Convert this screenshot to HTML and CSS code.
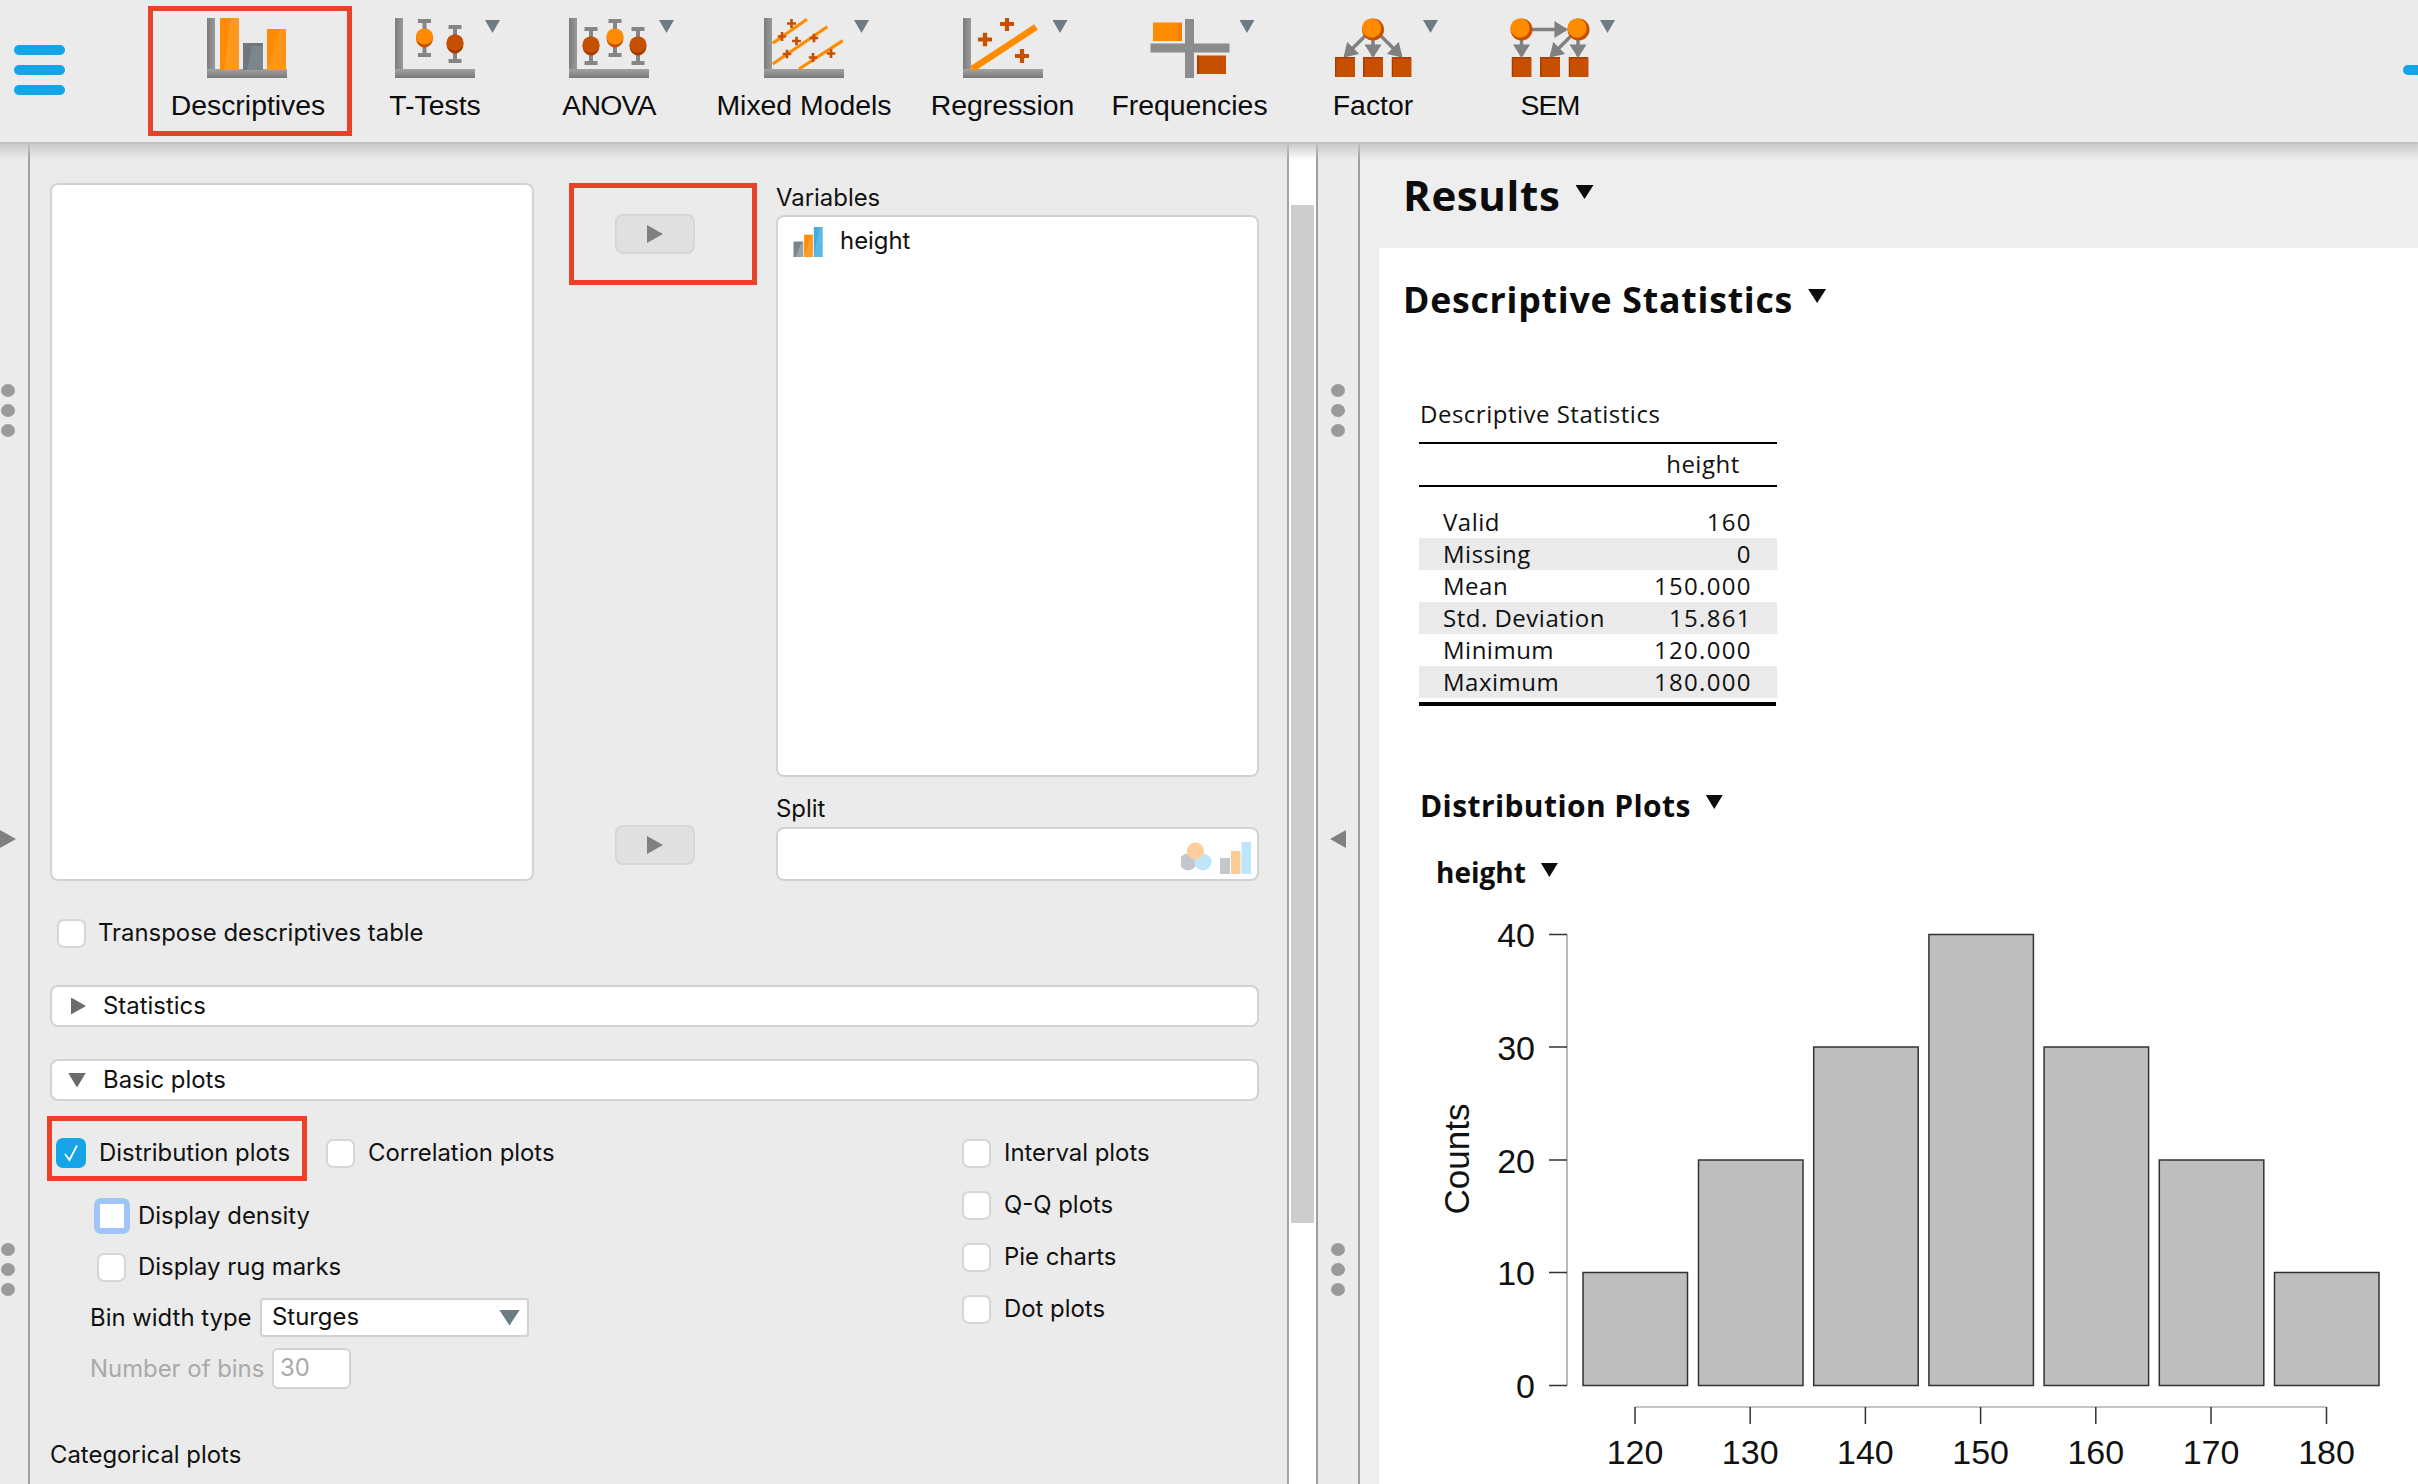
FILE: index.html
```html
<!DOCTYPE html>
<html lang="en">
<head>
<meta charset="utf-8">
<title>JASP Descriptives</title>
<link rel="stylesheet" href="styles.css">
</head>
<body>
<svg class="defs" aria-hidden="true">
  <defs>
    <linearGradient id="axv" x1="0" x2="1" y1="0" y2="0"><stop offset="0" stop-color="#7c7c7c"/><stop offset="1" stop-color="#9a9a9a"/></linearGradient>
    <linearGradient id="axh" x1="0" x2="0" y1="0" y2="1"><stop offset="0" stop-color="#a2a2a2"/><stop offset="1" stop-color="#7a7a7a"/></linearGradient>
    <marker id="ah" markerWidth="5" markerHeight="5" refX="3.4" refY="2.5" orient="auto" markerUnits="strokeWidth"><path d="M0 0L4 2.5L0 5Z" fill="#808080"/></marker>
    <symbol id="axis" viewBox="0 0 80 60">
      <rect x="0" y="0" width="8" height="60" fill="url(#axv)"/>
      <rect x="0" y="51" width="80" height="9" fill="url(#axh)"/>
    </symbol>
    <symbol id="ib-o" viewBox="0 0 18 38">
      <path d="M2.500 0h13v4h-4.500v30h4.500v4h-13v-4h4.500v-30h-4.500z" fill="#858585"/>
      <ellipse cx="9" cy="19" rx="8.500" ry="9.500" fill="#c65000"/>
      <ellipse cx="9" cy="17.500" rx="8.500" ry="8" fill="#ff8c00"/>
    </symbol>
    <symbol id="ib-d" viewBox="0 0 18 38">
      <path d="M2.500 0h13v4h-4.500v30h4.500v4h-13v-4h4.500v-30h-4.500z" fill="#858585"/>
      <ellipse cx="9" cy="19" rx="8.500" ry="9.500" fill="#a23c00"/>
      <ellipse cx="9" cy="17.500" rx="8.500" ry="8" fill="#c65000"/>
    </symbol>
    <symbol id="plus" viewBox="0 0 10 10">
      <path d="M3.500 0h3v3.500h3.500v3h-3.500v3.500h-3v-3.500h-3.500v-3h3.500z" fill="#c65000"/>
    </symbol>
    <symbol id="node" viewBox="0 0 24 24">
      <circle cx="12" cy="12" r="11.500" fill="#c65000"/>
      <ellipse cx="10.500" cy="10.500" rx="10" ry="10" fill="#ff8c00"/>
    </symbol>
    <symbol id="box" viewBox="0 0 20 20">
      <rect x="0" y="0" width="20" height="20" fill="#a83c00"/>
      <rect x="1.500" y="1.500" width="18.500" height="18.500" fill="#c65000"/>
    </symbol>
  </defs>
</svg>

<div class="app">
  <header class="toolbar">
    <button class="menu" aria-label="Menu"><span></span><span></span><span></span></button>

    <div class="tool tool-desc">
      <svg class="tool-icon" viewBox="0 0 80 60">
        <use href="#axis" width="80" height="60"/>
        <rect x="13" y="0" width="19" height="52" fill="#ff8c00"/>
        <path d="M24 0h8v52h-15z" fill="#ffa640" opacity=".45"/>
        <rect x="36" y="25" width="20" height="27" fill="#6f7880"/>
        <path d="M40 52L45 28h11v24z" fill="#8a9198" opacity=".5"/>
        <rect x="60" y="11" width="19" height="41" fill="#ff8c00"/>
        <path d="M60 52L73 11h6v41z" fill="#ffa640" opacity=".35"/>
      </svg>
      <span class="tool-label">Descriptives</span>
      <span class="mark mark-desc"></span>
    </div>

    <div class="tool tool-ttest">
      <svg class="tool-icon" viewBox="0 0 80 60">
        <use href="#axis" width="80" height="60"/>
        <use href="#ib-o" x="20.500" y="1" width="18" height="38"/>
        <use href="#ib-d" x="51" y="7" width="18" height="38"/>
      </svg>
      <span class="tool-label">T-Tests</span>
      <i class="drop"></i>
    </div>

    <div class="tool tool-anova">
      <svg class="tool-icon" viewBox="0 0 80 60">
        <use href="#axis" width="80" height="60"/>
        <use href="#ib-d" x="13" y="9" width="18" height="38"/>
        <use href="#ib-o" x="37" y="1" width="18" height="38"/>
        <use href="#ib-d" x="60" y="9" width="18" height="38"/>
      </svg>
      <span class="tool-label">ANOVA</span>
      <i class="drop"></i>
    </div>

    <div class="tool tool-mixed">
      <svg class="tool-icon" viewBox="0 0 80 60">
        <use href="#axis" width="80" height="60"/>
        <g stroke="#ff8c00" stroke-width="3.200" fill="none">
          <path d="M8.700 25.300L43 1.300"/>
          <path d="M8.700 46L63.300 8.700"/>
          <path d="M35 51L78.700 22.700"/>
        </g>
        <use href="#plus" x="23" y="1" width="9" height="9"/>
        <use href="#plus" x="13.500" y="14" width="9" height="9"/>
        <use href="#plus" x="28" y="18.500" width="9" height="9"/>
        <use href="#plus" x="45.500" y="15.500" width="9" height="9"/>
        <use href="#plus" x="18.500" y="31.500" width="9" height="9"/>
        <use href="#plus" x="44.500" y="35" width="9" height="9"/>
        <use href="#plus" x="62.500" y="31" width="9" height="9"/>
      </svg>
      <span class="tool-label">Mixed Models</span>
      <i class="drop"></i>
    </div>

    <div class="tool tool-reg">
      <svg class="tool-icon" viewBox="0 0 80 60">
        <use href="#axis" width="80" height="60"/>
        <path d="M9 51L73 9" stroke="#ff8c00" stroke-width="6.500" fill="none"/>
        <use href="#plus" x="37" y="-1" width="14" height="14"/>
        <use href="#plus" x="15" y="14.500" width="14" height="14"/>
        <use href="#plus" x="52" y="31" width="14" height="14"/>
      </svg>
      <span class="tool-label">Regression</span>
      <i class="drop"></i>
    </div>

    <div class="tool tool-freq">
      <svg class="tool-icon" viewBox="0 0 80 60">
        <rect x="3" y="4.500" width="29" height="18.500" fill="#ff8c00"/>
        <rect x="28" y="5" width="4" height="18" fill="#f27c10"/>
        <rect x="47" y="37.500" width="29" height="18.500" fill="#c65000"/>
        <rect x="47" y="37.500" width="2" height="18.500" fill="#a83c00"/>
        <rect x="0.500" y="25.500" width="79" height="9" fill="#8c8c8c"/>
        <rect x="35" y="1" width="9" height="59" fill="#8c8c8c"/>
      </svg>
      <span class="tool-label">Frequencies</span>
      <i class="drop"></i>
    </div>

    <div class="tool tool-factor">
      <svg class="tool-icon" viewBox="0 0 80 60">
        <use href="#box" x="2" y="39" width="20" height="20"/>
        <use href="#box" x="30" y="39" width="20" height="20"/>
        <use href="#box" x="58.500" y="39" width="20" height="20"/>
        <g stroke="#808080" stroke-width="3.400" fill="none">
          <path d="M34 16L12 38" marker-end="url(#ah)"/>
          <path d="M40 18V38" marker-end="url(#ah)"/>
          <path d="M46 16L68 38" marker-end="url(#ah)"/>
        </g>
        <use href="#node" x="28.500" y="0" width="23" height="23"/>
      </svg>
      <span class="tool-label">Factor</span>
      <i class="drop"></i>
    </div>

    <div class="tool tool-sem">
      <svg class="tool-icon" viewBox="0 0 80 60">
        <use href="#box" x="1.500" y="39" width="20" height="20"/>
        <use href="#box" x="30" y="39" width="20" height="20"/>
        <use href="#box" x="58.500" y="39" width="20" height="20"/>
        <g stroke="#808080" stroke-width="3.400" fill="none">
          <path d="M20 11.500H56" marker-end="url(#ah)"/>
          <path d="M11.500 20V38" marker-end="url(#ah)"/>
          <path d="M62 17L41 38" marker-end="url(#ah)"/>
          <path d="M68 20V38" marker-end="url(#ah)"/>
        </g>
        <use href="#node" x="0" y="0" width="23" height="23"/>
        <use href="#node" x="57" y="0" width="23" height="23"/>
      </svg>
      <span class="tool-label">SEM</span>
      <i class="drop"></i>
    </div>

    <span class="peek"></span>
  </header>

  <main class="main">
    <aside class="strip strip-left">
      <div class="dots dots-top"><i></i><i></i><i></i></div>
      <i class="arrow arrow-right"></i>
      <div class="dots dots-bottom"><i></i><i></i><i></i></div>
    </aside>

    <section class="panel">
      <div class="assign">
        <div class="listbox source"></div>
        <div class="assign-mid">
          <span class="mark mark-btn"></span>
          <button class="move"><i class="tri-move"></i></button>
          <button class="move move-last"><i class="tri-move"></i></button>
        </div>
        <div class="assign-right">
          <div class="field-label label-vars">Variables</div>
          <div class="listbox target">
            <div class="var-item">
              <svg class="var-icon" viewBox="0 0 30 31">
                <rect x="0" y="15" width="10" height="16" fill="#7d858c"/>
                <path d="M2 31L8 17h2v14z" fill="#9aa1a7"/>
                <rect x="11" y="8" width="9" height="23" fill="#ff8c00"/>
                <path d="M11 31L18 8h2v23z" fill="#ffa640" opacity=".6"/>
                <rect x="21" y="0" width="9" height="31" fill="#43ade2"/>
                <path d="M21 31L27 0h3v31z" fill="#6cc2ec" opacity=".6"/>
              </svg>
              <span>height</span>
            </div>
          </div>
          <div class="field-label label-split">Split</div>
          <div class="listbox split">
            <svg class="split-icons" viewBox="0 0 76 32">
              <circle cx="7" cy="20" r="8.500" fill="#c4c6c9"/>
              <circle cx="22" cy="20" r="8.500" fill="#bde6fb"/>
              <ellipse cx="14.500" cy="9" rx="8.500" ry="8.500" fill="#fdcf9d"/>
              <rect x="39" y="16" width="10" height="16" fill="#c4c8cc"/>
              <rect x="50" y="9" width="9.500" height="23" fill="#fdcb96"/>
              <rect x="60.500" y="0" width="9.500" height="32" fill="#bde6fb"/>
            </svg>
          </div>
        </div>
      </div>

      <label class="row row-transpose"><i class="check"></i><span>Transpose descriptives table</span></label>

      <div class="section sec-stats"><i class="sec-right"></i><span>Statistics</span></div>
      <div class="section sec-basic"><i class="sec-down"></i><span>Basic plots</span></div>

      <div class="plots">
        <div class="plots-left">
          <div class="row-pair">
            <label class="row row-dist"><i class="check check-on"><svg viewBox="0 0 30 30"><path d="M9 16l4.500 6L21 7.500" fill="none" stroke="#fff" stroke-width="1.800"/></svg></i><span>Distribution plots</span></label>
            <label class="row"><i class="check"></i><span>Correlation plots</span></label>
            <span class="mark mark-dist"></span>
          </div>
          <label class="row row-sub row-density"><i class="check check-focus"></i><span>Display density</span></label>
          <label class="row row-sub row-rug"><i class="check"></i><span>Display rug marks</span></label>
          <div class="row row-field row-bin">
            <span class="field-name name-bin">Bin width type</span>
            <div class="select"><span>Sturges</span><i class="select-tri"></i></div>
          </div>
          <div class="row row-field row-num">
            <span class="field-name name-num">Number of bins</span>
            <div class="num-input">30</div>
          </div>
          <div class="cat-title">Categorical plots</div>
        </div>
        <div class="plots-right">
          <label class="row"><i class="check"></i><span>Interval plots</span></label>
          <label class="row"><i class="check"></i><span>Q-Q plots</span></label>
          <label class="row"><i class="check"></i><span>Pie charts</span></label>
          <label class="row"><i class="check"></i><span>Dot plots</span></label>
        </div>
      </div>
    </section>

    <div class="scroll"><div class="thumb"></div></div>

    <aside class="strip strip-right">
      <div class="dots dots-top"><i></i><i></i><i></i></div>
      <i class="arrow arrow-left"></i>
      <div class="dots dots-bottom"><i></i><i></i><i></i></div>
    </aside>

    <section class="results">
      <h1 class="results-title">Results<i class="tri-head"></i></h1>
      <div class="sheet">
        <h2 class="h-desc">Descriptive Statistics<i class="tri-head"></i></h2>
        <div class="stats-wrap">
          <table class="stats">
            <caption>Descriptive Statistics</caption>
            <thead><tr><th></th><th>height</th></tr></thead>
            <tbody>
              <tr class="spacer"><td colspan="2"></td></tr>
              <tr><td>Valid</td><td>160</td></tr>
              <tr class="alt"><td>Missing</td><td>0</td></tr>
              <tr><td>Mean</td><td>150.000</td></tr>
              <tr class="alt"><td>Std. Deviation</td><td>15.861</td></tr>
              <tr><td>Minimum</td><td>120.000</td></tr>
              <tr class="alt"><td>Maximum</td><td>180.000</td></tr>
            </tbody>
          </table>
        </div>
        <h3 class="h-dist">Distribution Plots<i class="tri-sub"></i></h3>
        <h4 class="h-var">height<i class="tri-sub"></i></h4>
        <svg class="plot" viewBox="1379 900 1039 584">
          <g class="bars">
            <rect x="1583" y="1272.500" width="104.500" height="113"/>
            <rect x="1698.500" y="1160" width="104.500" height="225.500"/>
            <rect x="1813.700" y="1047" width="104.500" height="338.500"/>
            <rect x="1928.900" y="934.500" width="104.500" height="451"/>
            <rect x="2044.100" y="1047" width="104.500" height="338.500"/>
            <rect x="2159.300" y="1160" width="104.500" height="225.500"/>
            <rect x="2274.500" y="1272.500" width="104.500" height="113"/>
          </g>
          <g class="axis-lines">
            <path class="axis-soft" d="M1567 934.500V1385.500"/>
            <path d="M1549 934.500H1567M1549 1047H1567M1549 1160H1567M1549 1272.500H1567M1549 1385.500H1567"/>
            <path class="axis-soft" d="M1635 1407H2326.500"/>
            <path d="M1635 1407V1424M1750.200 1407V1424M1865.400 1407V1424M1980.600 1407V1424M2095.800 1407V1424M2211 1407V1424M2326.500 1407V1424"/>
          </g>
          <g class="ylabels">
            <text x="1535" y="947">40</text>
            <text x="1535" y="1060">30</text>
            <text x="1535" y="1172.500">20</text>
            <text x="1535" y="1285">10</text>
            <text x="1535" y="1398">0</text>
          </g>
          <g class="xlabels">
            <text x="1635" y="1464">120</text>
            <text x="1750.200" y="1464">130</text>
            <text x="1865.400" y="1464">140</text>
            <text x="1980.600" y="1464">150</text>
            <text x="2095.800" y="1464">160</text>
            <text x="2211" y="1464">170</text>
            <text x="2326.500" y="1464">180</text>
          </g>
          <text class="ytitle" transform="translate(1469 1159) rotate(-90)">Counts</text>
        </svg>
      </div>
    </section>
  </main>
</div>
</body>
</html>
```
FILE: styles.css
```css
* { box-sizing: border-box; }
html, body { margin: 0; padding: 0; height: 100%; overflow: hidden; background: #ebebeb; }
body { font-family: Inter, "Liberation Sans", sans-serif; color: #111; font-size: 23.900px; }
i { display: block; }
.defs { display: block; width: 0; height: 0; }

.app { display: flex; flex-direction: column; height: 1484px; }

/* toolbar */
.toolbar {
  position: relative; z-index: 2; display: flex; flex: none; height: 144px;
  background: #ebebeb; border-bottom: 2px solid #999;
}
.toolbar::after {
  content: ""; position: absolute; left: 0; right: 0; top: 142px; height: 18px;
  background: linear-gradient(#c6c6c6, rgba(200,200,200,0)); pointer-events: none;
}
.menu {
  flex: none; display: flex; flex-direction: column; gap: 10px; width: 51px;
  margin: 45px 83px 0 14px; padding: 0; border: 0; background: none; align-self: flex-start;
}
.menu span { display: block; height: 10px; border-radius: 5px; background: #14a4e8; }
.peek { margin: 65px 0 0 auto; width: 15px; height: 10px; border-radius: 5px 0 0 5px; background: #14a4e8; }

.tool { position: relative; flex: none; display: flex; flex-direction: column; align-items: center; padding-top: 18px; }
.tool-icon { display: block; width: 80px; height: 60px; flex: none; }
.tool-label {
  margin-top: 10px; font: 28.400px/34px "Liberation Sans", sans-serif; color: #0c0c0c; white-space: nowrap;
}
.tool-desc { width: 200px; }
.tool-desc .tool-icon { margin-left: -3px; }
.tool-ttest { width: 174px; }
.tool-anova { width: 174px; }
.tool-anova .tool-label { letter-spacing: -.8px; }
.tool-mixed { width: 216px; }
.tool-reg { width: 181px; }
.tool-freq { width: 193px; }
.tool-factor { width: 174px; }
.tool-sem { width: 180px; }
.tool-sem .tool-label { letter-spacing: -.8px; }
.drop {
  position: absolute; top: 20px; left: calc(50% + 50px); width: 15px; height: 13px;
  background: #6d7b85; clip-path: polygon(0 0, 100% 0, 50% 100%);
}

.mark { position: absolute; border: 5px solid #ea4228; pointer-events: none; }
.mark-desc { left: 0; top: 6px; width: 204px; height: 130px; }
.mark-btn { left: 35px; top: 0; width: 188px; height: 102px; }
.mark-dist { left: -9px; top: -22px; width: 260px; height: 65px; }

/* main */
.main { display: flex; flex: 1; min-height: 0; }
.strip { flex: none; display: flex; flex-direction: column; background: #ebebeb; }
.strip-left { width: 30px; border-right: 2px solid #9f9f9f; align-items: flex-start; padding-left: 1px; }
.strip-right { width: 44px; border-left: 2px solid #9f9f9f; border-right: 2px solid #9f9f9f; align-items: center; }
.dots { display: flex; flex-direction: column; gap: 7px; }
.dots i { width: 14px; height: 13px; border-radius: 50%; background: #9a9a9a; }
.dots-top { margin-top: 240px; }
.dots-bottom { margin-top: 395px; }
.arrow { width: 16px; height: 18px; margin-top: 393px; background: #808080; }
.arrow-right { margin-left: -1px; clip-path: polygon(0 0, 100% 50%, 0 100%); }
.arrow-left { clip-path: polygon(100% 0, 0 50%, 100% 100%); }

.panel { flex: none; width: 1259px; padding: 39px 28px 0 20px; background: #ebebeb; border-right: 2px solid #a4a4a4; overflow: hidden; }
.assign { display: flex; height: 698px; }
.listbox { background: #fff; border: 2.500px solid #d2d2d2; border-radius: 8px; }
.source { flex: none; width: 484px; }
.assign-mid { position: relative; flex: none; width: 242px; display: flex; flex-direction: column; align-items: flex-start; padding: 31px 0 16px 81px; }
.move { display: flex; align-items: center; justify-content: center; width: 80px; height: 40px; padding: 0; background: #e0e0e0; border: 2px solid #d6d6d6; border-radius: 8px; }
.move-last { margin-top: auto; }
.tri-move { width: 16px; height: 18px; background: #808080; clip-path: polygon(0 0, 100% 50%, 0 100%); }
.assign-right { flex: none; width: 483px; display: flex; flex-direction: column; }
.field-label { line-height: 28px; }
.label-vars { height: 32px; padding-top: 1px; }
.label-split { height: 50px; padding-top: 18px; }
.target { flex: 1; padding: 10px 0 0 15px; }
.var-item { display: flex; align-items: center; gap: 17px; height: 30px; }
.var-item span { padding-bottom: 3px; }
.var-icon { width: 30px; height: 30px; flex: none; }
.split { flex: none; height: 54px; display: flex; justify-content: flex-end; align-items: flex-start; padding: 13px 0 0 0; }
.split-icons { width: 76px; height: 32px; display: block; }

.row { display: flex; align-items: center; gap: 13px; height: 30px; white-space: nowrap; }
.row > span, .section span { padding-bottom: 1px; }
.check { flex: none; width: 29px; height: 29px; background: #fff; border: 2px solid #d6d6d6; border-radius: 7px; }
.check-on { width: 30px; height: 30px; background: #14a4e8; border: 0; }
.check-on svg { display: block; width: 30px; height: 30px; }
.check-focus { width: 36px; height: 36px; margin: -3px -4px -3px -3px; border: 6px solid #9ec5f5; border-radius: 7px; }
.row-transpose { margin: 37px 0 0 7px; gap: 12px; }

.section { display: flex; align-items: center; height: 42px; background: #fff; border: 2.500px solid #d2d2d2; border-radius: 8px; padding-left: 16px; }
.section span { margin-left: 14px; padding-bottom: 2px; }
.sec-stats { margin-top: 37px; }
.sec-basic { margin-top: 32px; }
.sec-right { width: 15px; height: 17px; margin: 0 3px 0 3px; background: #6b6b6b; clip-path: polygon(0 0, 100% 50%, 0 100%); }
.sec-down { width: 18px; height: 15px; margin-right: 3px; background: #6b6b6b; clip-path: polygon(0 0, 100% 0, 50% 100%); }

.plots { display: grid; grid-template-columns: 912px 1fr; }
.plots-left { padding-top: 37px; }
.plots-right { padding-top: 37px; display: flex; flex-direction: column; gap: 22px; }
.row-pair { position: relative; display: flex; margin-left: 6px; }
.row-dist { width: 270px; }
.row-sub { margin-left: 47px; gap: 12px; }
.row-density { margin-top: 33px; }
.row-rug { margin-top: 21px; }
.row-field { height: auto; gap: 0; margin-left: 40px; }
.row-bin { margin-top: 16px; }
.row-num { margin-top: 11px; color: #a9a9a9; }
.name-bin { width: 170px; padding-bottom: 2px; }
.name-num { width: 182px; }
.select { display: flex; align-items: center; justify-content: space-between; width: 269px; height: 39px; padding: 0 7px 0 10px; background: #fff; border: 2.500px solid #d2d2d2; border-radius: 4px; color: #111; }
.select > span { padding-bottom: 2px; }
.select-tri { width: 21px; height: 16px; background: #6d7b85; clip-path: polygon(0 0, 100% 0, 50% 100%); }
.num-input { width: 79px; height: 41px; line-height: 36px; padding-left: 6px; background: #fff; border: 2.500px solid #d2d2d2; border-radius: 6px; }
.cat-title { margin-top: 52px; line-height: 28px; }

.scroll { flex: none; width: 27px; background: #fff; padding: 61px 2px 0; }
.thumb { height: 1018px; background: #cdcdcd; }

/* results */
.results { flex: 1; min-width: 0; display: flex; flex-direction: column; background: #eee; font-family: "Open Sans", "DejaVu Sans", sans-serif; }
.results-title { display: flex; align-items: flex-start; flex: none; height: 104px; margin: 0; padding: 26px 0 0 43px; font-size: 42px; line-height: 50px; font-weight: 700; letter-spacing: .65px; color: #0c0c0c; }
.tri-head { width: 18px; height: 14px; margin: 15px 0 0 15px; background: #0c0c0c; clip-path: polygon(0 0, 100% 0, 50% 100%); }
.sheet { flex: 1; margin-left: 19px; background: #fff; overflow: hidden; }
.h-desc { display: flex; align-items: flex-start; margin: 31px 0 0 24px; font-size: 35.700px; line-height: 40px; font-weight: 700; letter-spacing: .75px; color: #0c0c0c; }
.h-desc .tri-head { margin: 10px 0 0 15px; }
.stats-wrap { width: 357px; margin: 80px 0 0 40px; padding-bottom: 4px; border-bottom: 4px solid #000; }
.stats { width: 100%; border-collapse: separate; border-spacing: 0; font-size: 24px; letter-spacing: .5px; color: #111; }
.stats caption { text-align: left; padding: 0 0 11px 1px; line-height: 30px; height: 43px; }
.stats th { height: 45px; padding: 0 37px 2px 0; font-weight: 400; text-align: right; border-top: 2px solid #000; border-bottom: 2px solid #000; }
.stats td { height: 32px; padding: 0 25px 0 24px; line-height: 30px; white-space: nowrap; }
.stats td:last-child { text-align: right; letter-spacing: 1.3px; }
.stats .spacer td { height: 19px; padding: 0; }
.stats .alt td { background: #eaeaea; }
.h-dist { display: flex; align-items: flex-start; margin: 80px 0 0 41px; font-size: 30px; line-height: 40px; font-weight: 700; letter-spacing: .4px; color: #0c0c0c; }
.h-var { display: flex; align-items: flex-start; margin: 28px 0 0 57px; font-size: 28px; line-height: 36px; font-weight: 700; color: #0c0c0c; }
.tri-sub { width: 17px; height: 14px; margin: 9px 0 0 15px; background: #0c0c0c; clip-path: polygon(0 0, 100% 0, 50% 100%); }
.plot { display: block; width: 1039px; height: 584px; margin-top: 10px; font-family: "Liberation Sans", sans-serif; font-size: 34px; fill: #111; }
.bars rect { fill: #bebebe; stroke: #333; stroke-width: 1.500; }
.axis-lines path { fill: none; stroke: #333; stroke-width: 1.500; }
.axis-lines .axis-soft { stroke: #8a8a8a; stroke-width: 1.200; }
.ylabels text { text-anchor: end; }
.xlabels text { text-anchor: middle; }
.ytitle { text-anchor: middle; font-size: 35px; }
```
